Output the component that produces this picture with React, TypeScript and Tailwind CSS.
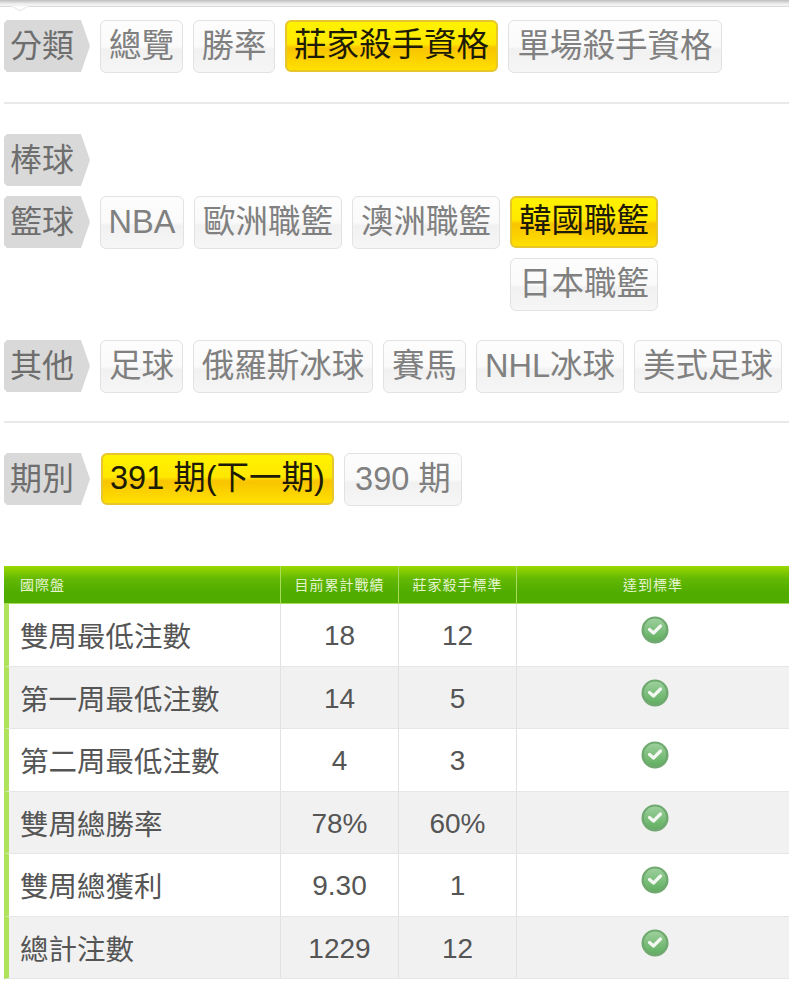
const font = "[font-family:'Liberation_Sans','Noto_Sans_CJK_TC',sans-serif]";

function Label({ children }: { children: string }) {
  return (
    <div className="w-[86px] h-[52px] shrink-0 bg-[#d9d9d9] text-[#6e6e6e] text-[32px] leading-[53px] pl-[6px] [clip-path:polygon(3px_0,77px_0,86px_26px,77px_52px,3px_52px,0_49px,0_3px)]">
      {children}
    </div>
  );
}

function Btn({ children, on, w }: { children: string; on?: boolean; w: string }) {
  if (on) {
    return (
      <div className={`${w} h-[52px] shrink-0 rounded-[6px] border-2 border-[#e6c62a] bg-[linear-gradient(#fff200_0%,#ffe800_46%,#f8c400_54%,#ffe000_100%)] text-[#1d1a05] text-[32.5px] leading-[47px] text-center whitespace-nowrap`}>
        {children}
      </div>
    );
  }
  return (
    <div className={`${w} h-[53px] shrink-0 rounded-[6px] border border-[#e2e2e2] bg-[linear-gradient(#fdfdfd_0%,#fafafa_50%,#f1f1f1_56%,#f6f6f6_100%)] text-[#808080] text-[32.5px] leading-[50px] text-center whitespace-nowrap`}>
      {children}
    </div>
  );
}

function Check() {
  return (
    <svg width="28" height="28" viewBox="0 0 28 28" className="block">
      <defs>
        <linearGradient id="chk" x1="0" y1="0" x2="0" y2="1">
          <stop offset="0" stopColor="#9ccf9c" />
          <stop offset="1" stopColor="#62b062" />
        </linearGradient>
      </defs>
      <circle cx="14" cy="14" r="13.5" fill="#6fa96f" />
      <circle cx="14" cy="13.5" r="11" fill="url(#chk)" />
      <path d="M8.5 13.5 L12.5 17 L19.5 10" fill="none" stroke="#f4f8f2" strokeWidth="3.2" strokeLinecap="round" strokeLinejoin="round" />
    </svg>
  );
}

const rows = [
  ["雙周最低注數", "18", "12"],
  ["第一周最低注數", "14", "5"],
  ["第二周最低注數", "4", "3"],
  ["雙周總勝率", "78%", "60%"],
  ["雙周總獲利", "9.30", "1"],
  ["總計注數", "1229", "12"],
];

export default function App() {
  return (
    <div className={`${font} relative w-[789px] h-[1000px] bg-white overflow-hidden`}>
      <div className="h-[7px] bg-[linear-gradient(#bdbdbd,#f2f2f2_70%)] border-b border-[#dcdcdc]" />
      <svg width="16" height="6" viewBox="0 0 16 6" className="absolute left-[12px] top-[6px]">
        <path d="M0 0 L8 5 L16 0 Z" fill="#ffffff" stroke="#e2e2e2" strokeWidth="1" />
        <path d="M0 0 H16" stroke="#ffffff" strokeWidth="1.5" />
      </svg>
      <div className="pl-[4px]">
        <div className="flex gap-[10px] mt-[13px]">
          <Label>分類</Label>
          <Btn w="w-[83px]">總覽</Btn>
          <Btn w="w-[82px]">勝率</Btn>
          <Btn on w="w-[213px]">莊家殺手資格</Btn>
          <Btn w="w-[214px]">單場殺手資格</Btn>
        </div>
        <div className="h-[2px] bg-[#e9e9e9] mt-[29px]" />

        <div className="mt-[30px]">
          <Label>棒球</Label>
        </div>
        <div className="flex gap-[10px] mt-[10px]">
          <Label>籃球</Label>
          <Btn w="w-[84px]">NBA</Btn>
          <Btn w="w-[148px]">歐洲職籃</Btn>
          <Btn w="w-[148px]">澳洲職籃</Btn>
          <div className="flex flex-col gap-[10px]">
            <Btn on w="w-[148px]">韓國職籃</Btn>
            <Btn w="w-[148px]">日本職籃</Btn>
          </div>
        </div>
        <div className="flex gap-[10px] mt-[29px]">
          <Label>其他</Label>
          <Btn w="w-[83px]">足球</Btn>
          <Btn w="w-[180px]">俄羅斯冰球</Btn>
          <Btn w="w-[83px]">賽馬</Btn>
          <Btn w="w-[148px]">NHL冰球</Btn>
          <Btn w="w-[148px]">美式足球</Btn>
        </div>
        <div className="h-[2px] bg-[#e9e9e9] mt-[28px]" />

        <div className="flex gap-[10px] mt-[30px]">
          <Label>期別</Label>
          <div className="ml-px">
            <Btn on w="w-[233px]">391 期(下一期)</Btn>
          </div>
          <Btn w="w-[118px]">390 期</Btn>
        </div>

        <div className="mt-[60px]">
          <div className="flex h-[38px] bg-[linear-gradient(#9ad800_0%,#63b804_35%,#50ad00_70%,#50ad00_100%)] border-b border-[#a8dc5a] text-[14px] tracking-[1px] leading-[38px] text-[#e6f5d0]">
            <div className="w-[276px] pl-[16px]">國際盤</div>
            <div className="w-[118px] text-center border-l border-[#a8dc5a]">目前累計戰績</div>
            <div className="w-[118px] text-center border-l border-[#a8dc5a]">莊家殺手標準</div>
            <div className="flex-1 text-center border-l border-[#a8dc5a]">達到標準</div>
          </div>
          {rows.map((r, i) => (
            <div
              key={r[0]}
              className={`flex h-[62.5px] border-l-[5px] border-l-[#aee35a] border-b border-b-[#e6e6e6] text-[#555555] text-[28px] leading-[64px] ${i % 2 ? "bg-[#f1f1f1]" : "bg-white"}`}
            >
              <div className="w-[271px] pl-[11px] text-[28.5px] leading-[66px] whitespace-nowrap">{r[0]}</div>
              <div className="w-[118px] text-center border-l border-[#e2e2e2]">{r[1]}</div>
              <div className="w-[118px] text-center border-l border-[#e2e2e2]">{r[2]}</div>
              <div className="flex-1 flex justify-center pl-[3px] pt-[12px] border-l border-[#e2e2e2]">
                <Check />
              </div>
            </div>
          ))}
        </div>
      </div>
    </div>
  );
}
